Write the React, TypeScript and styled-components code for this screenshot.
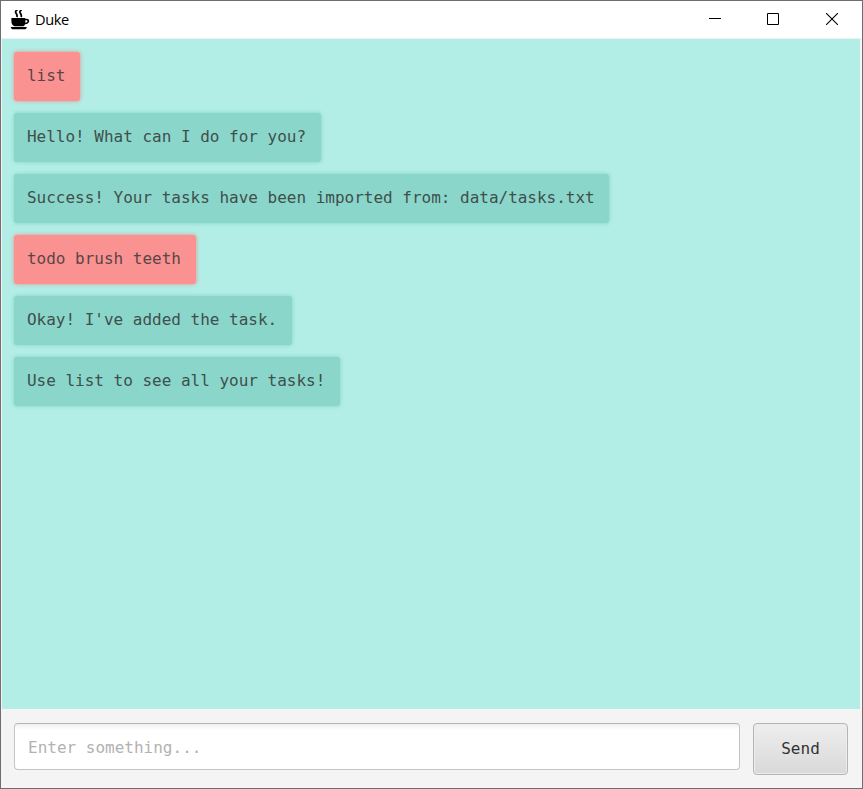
import React from "react";
import styled, { createGlobalStyle } from "styled-components";

const GlobalStyle = createGlobalStyle`
  * { box-sizing: border-box; }
  body { margin: 0; overflow: hidden; }
`;

const mono = `"DejaVu Sans Mono", "Liberation Mono", monospace`;

const Window = styled.div`
  display: flex;
  flex-direction: column;
  width: 863px;
  height: 789px;
  border: 1px solid #6e6e6e;
  background: #f4f4f4;
`;

const TitleBar = styled.header`
  display: flex;
  align-items: center;
  height: 38px;
  flex: none;
  background: #fff;
  padding: 0 1px 0 9px;
  border-bottom: 1px solid #e9f3f5;
`;

const Title = styled.h1`
  margin: 0 auto 0 5px;
  padding-bottom: 2px;
  font: 400 14.6px/20px "Open Sans", sans-serif;
  letter-spacing: -0.4px;
  color: #000;
`;

const WindowButton = styled.button`
  display: grid;
  place-items: center;
  width: 58.5px;
  height: 36px;
  padding: 0 0 2px;
  border: 0;
  background: none;
`;

const Messages = styled.main`
  display: flex;
  flex-direction: column;
  align-items: flex-start;
  gap: 12px;
  height: 670px;
  flex: none;
  margin: 0 2px 0 1px;
  padding: 12.6px 11.6px;
  background: #b2eee6;
`;

const Bubble = styled.p<{ $user?: boolean }>`
  margin: 0;
  height: 49px;
  padding: 0 14.6px 0 13.4px;
  border-radius: 3px;
  white-space: pre;
  font: 16px/48px ${mono};
  letter-spacing: -0.01px;
  color: ${(p) => (p.$user ? "#5b4546" : "#3f4f4b")};
  background: ${(p) => (p.$user ? "#fa9292" : "#8bd6cb")};
  box-shadow: 0 0 4px ${(p) => (p.$user ? "#e88f8c" : "#83cfc4")};
`;

const Composer = styled.form`
  display: flex;
  align-items: flex-start;
  gap: 13px;
  padding: 14px 14px 0 13px;
`;

const MessageInput = styled.input`
  flex: 1;
  min-width: 0;
  height: 47px;
  padding: 2px 13px 0;
  border: 1px solid #c4c4c4;
  border-top-color: #b5b5b5;
  border-radius: 4px;
  outline: 0;
  background: linear-gradient(#f0f0f0, #fff 6px);
  font: 16px ${mono};
  &::placeholder { color: #b2b2b2; opacity: 1; }
`;

const SendButton = styled.button`
  width: 95px;
  height: 52px;
  padding: 0 0 2px;
  border: 1px solid #b5b5b5;
  border-radius: 4px;
  background: linear-gradient(#eeeeee, #d9d9d9);
  box-shadow: inset 0 0 0 1px #ececec;
  font: 16px ${mono};
  color: #333;
`;

const messages = [
  { text: "list", user: true },
  { text: "Hello! What can I do for you?" },
  { text: "Success! Your tasks have been imported from: data/tasks.txt" },
  { text: "todo brush teeth", user: true },
  { text: "Okay! I've added the task." },
  { text: "Use list to see all your tasks!" },
];

const CupIcon = () => (
  <svg width="20" height="20" viewBox="0 0 20 20">
    <path d="M1.4 8h13.8v1c2.3-.6 4 .2 4 2 0 1.900-1.700 3.100-4.100 3.200-.4 1-1 1.600-1.800 2H4.200C2.200 15.200 1.400 13.500 1.400 11zM15.300 10.400v2.300c1.400-.1 2.200-.6 2.200-1.500 0-.8-1-1-2.200-.8z" fill="#000" fillRule="evenodd" />
    <path d="M.8 17h16c-.2 1.500-1 2.300-2.300 2.300H3.200C1.900 19.300 1 18.500.8 17z" fill="#000" />
    <path d="M7.400 0C2.800 2.300 8.600 3.700 6.700 7M11.700 0C7.100 2.300 12.900 3.700 11 7" fill="none" stroke="#000" strokeWidth="1.8" />
  </svg>
);

export default function App() {
  return (
    <>
      <GlobalStyle />
      <Window>
        <TitleBar>
          <CupIcon />
          <Title>Duke</Title>
          <WindowButton aria-label="Minimize">
            <svg width="12" height="12"><path d="M0 5.5h12" stroke="#000" /></svg>
          </WindowButton>
          <WindowButton aria-label="Maximize">
            <svg width="12" height="12"><path d="M.5.5h11v11H.5z" fill="none" stroke="#000" /></svg>
          </WindowButton>
          <WindowButton aria-label="Close">
            <svg width="12" height="12"><path d="M0 0l12 12M12 0L0 12" stroke="#000" strokeWidth="1.1" /></svg>
          </WindowButton>
        </TitleBar>
        <Messages>
          {messages.map((m) => (
            <Bubble key={m.text} $user={m.user}>{m.text}</Bubble>
          ))}
        </Messages>
        <Composer onSubmit={(e) => e.preventDefault()}>
          <MessageInput placeholder="Enter something..." />
          <SendButton>Send</SendButton>
        </Composer>
      </Window>
    </>
  );
}
